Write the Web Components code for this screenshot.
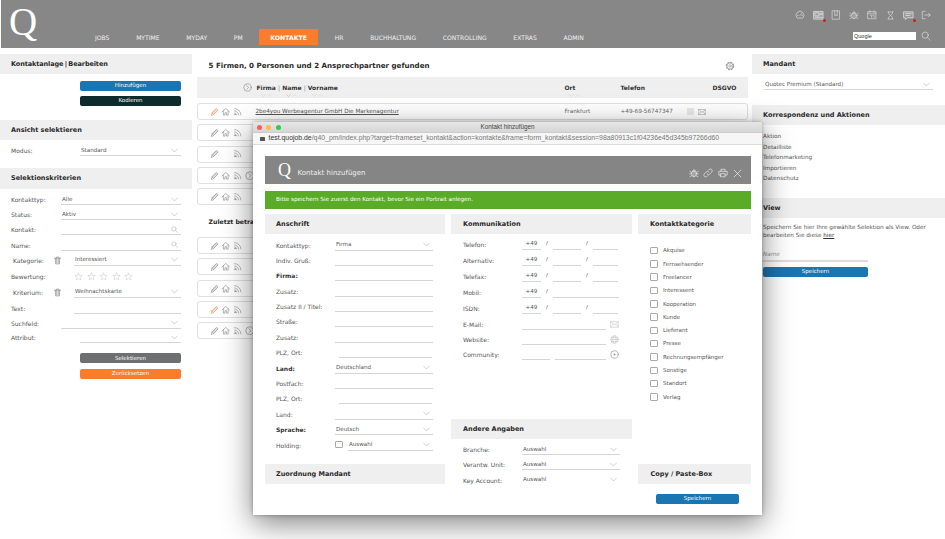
<!DOCTYPE html>
<html lang="de"><head><meta charset="utf-8"><title>Kontakt hinzufügen</title>
<style>
html,body{margin:0;background:#fff}
body{font:6px/1.2 "DejaVu Sans",sans-serif;color:#555}
</style></head><body>
<q-app>
  <q-topbar slot="top"></q-topbar>

  <q-col slot="left">
    <q-head style="word-spacing:-.8px;letter-spacing:-.1px">Kontaktanlage | Bearbeiten</q-head>
    <q-pad style="--t:7px;--gap:5px;--l:80px;--b:14px">
      <q-btn color="#1a76b0">Hinzufügen</q-btn>
      <q-btn color="#0d2a2c">Kodieren</q-btn>
    </q-pad>
    <q-head>Ansicht selektieren</q-head>
    <q-pad style="--t:4px;--b:9px">
      <q-field label="Modus:" lw="69"><q-select value="Standard"></q-select></q-field>
    </q-pad>
    <q-head style="--hh:21px">Selektionskriterien</q-head>
    <q-pad style="--t:4px">
      <q-field label="Kontakttyp:" lw="50" h="15.2"><q-select value="Alle"></q-select></q-field>
      <q-field label="Status:" lw="50" h="15.2"><q-select value="Aktiv"></q-select></q-field>
      <q-field label="Kontakt:" lw="50" h="15.2"><q-select search></q-select></q-field>
      <q-field label="Name:" lw="50" h="15.2"><q-select search></q-select></q-field>
      <q-field label="Kategorie:" lw="63" indent="2" trash h="16"><q-select value="Interessiert"></q-select></q-field>
      <q-field label="Bewertung:" lw="63" h="16"><q-stars></q-stars></q-field>
      <q-field label="Kriterium:" lw="63" indent="2" trash h="16"><q-select value="Weihnachtskarte"></q-select></q-field>
      <q-field label="Text:" lw="63" h="15"><q-select plain></q-select></q-field>
      <q-field label="Suchfeld:" lw="50" h="14.6"><q-select></q-select></q-field>
      <q-field label="Attribut:" lw="69" h="15"><q-select></q-select></q-field>
    </q-pad>
    <q-pad style="--t:7px;--gap:5.5px;--l:80px">
      <q-btn color="#6d7070">Selektieren</q-btn>
      <q-btn color="#fb7d2b">Zurücksetzen</q-btn>
    </q-pad>
  </q-col>

  <q-col slot="main">
    <q-title gear style="--tf:7.1px">5 Firmen, 0 Personen und 2 Ansprechpartner gefunden</q-title>
    <q-thead></q-thead>
    <q-rows>
      <q-row active firm="2be4you Werbeagentur GmbH Die Markenagentur" ort="Frankfurt" tel="+49-69-56747347" dsgvo></q-row>
      <q-row></q-row>
      <q-row nohome></q-row>
      <q-row more></q-row>
      <q-row></q-row>
    </q-rows>
    <q-title style="--th:32px;--tpad:2px;--tf:6.2px">Zuletzt betrachtet</q-title>
    <q-rows>
      <q-row></q-row>
      <q-row></q-row>
      <q-row></q-row>
      <q-row active></q-row>
      <q-row more></q-row>
    </q-rows>
  </q-col>

  <q-col slot="right">
    <q-head>Mandant</q-head>
    <q-pad style="--t:4px;--l:12px;--r:12px;--b:11px">
      <q-field h="16"><q-select value="Quotec Premium (Standard)"></q-select></q-field>
    </q-pad>
    <q-head>Korrespondenz und Aktionen</q-head>
    <q-links>
      <span>Aktion</span><span>Detailliste</span><span>Telefonmarketing</span><span>Importieren</span><span>Datenschutz</span>
    </q-links>
    <q-head>View</q-head>
    <q-view></q-view>
  </q-col>

  <q-window slot="over" win-title="Kontakt hinzufügen">
    <q-form-head></q-form-head>
    <q-notice>Bitte speichern Sie zuerst den Kontakt, bevor Sie ein Portrait anlegen.</q-notice>
    <q-cols>
      <q-fcol>
        <q-head style="--hl:11px">Anschrift</q-head>
        <q-pad style="--t:4.5px;--l:11px;--r:12px">
          <q-field label="Kontakttyp:" lw="59" h="15.4"><q-select value="Firma"></q-select></q-field>
          <q-field label="Indiv. Gruß:" lw="59" h="15.4"><q-select plain></q-select></q-field>
          <q-field label="Firma:" lw="59" h="15.4" bold><q-select plain></q-select></q-field>
          <q-field label="Zusatz:" lw="59" h="15.4"><q-select plain></q-select></q-field>
          <q-field label="Zusatz II / Titel:" lw="59" h="15.4"><q-select plain></q-select></q-field>
          <q-field label="Straße:" lw="59" h="15.4"><q-select plain></q-select></q-field>
          <q-field label="Zusatz:" lw="59" h="15.4"><q-select plain></q-select></q-field>
          <q-field label="PLZ, Ort:" lw="59" h="15.4"><q-split></q-split></q-field>
          <q-field label="Land:" lw="59" h="15.4" bold><q-select value="Deutschland"></q-select></q-field>
          <q-field label="Postfach:" lw="59" h="15.4"><q-select plain></q-select></q-field>
          <q-field label="PLZ, Ort:" lw="59" h="15.4"><q-split></q-split></q-field>
          <q-field label="Land:" lw="59" h="15.4"><q-select></q-select></q-field>
          <q-field label="Sprache:" lw="59" h="15.4" bold><q-select value="Deutsch"></q-select></q-field>
          <q-field label="Holding:" lw="59" h="15.4"><q-holding></q-holding></q-field>
        </q-pad>
        <q-head style="--hl:11px;margin-top:auto">Zuordnung Mandant</q-head>
      </q-fcol>
      <q-fcol>
        <q-head style="--hl:12px">Kommunikation</q-head>
        <q-pad style="--t:4px;--l:12px;--r:12px">
          <q-field label="Telefon:" lw="59" h="16"><q-phone></q-phone></q-field>
          <q-field label="Alternativ:" lw="59" h="16"><q-phone></q-phone></q-field>
          <q-field label="Telefax:" lw="59" h="16"><q-phone></q-phone></q-field>
          <q-field label="Mobil:" lw="59" h="16"><q-phone two></q-phone></q-field>
          <q-field label="ISDN:" lw="59" h="15.5"><q-phone></q-phone></q-field>
          <q-field label="E-Mail:" lw="59" h="15.2"><q-mline icon="mail"></q-mline></q-field>
          <q-field label="Website:" lw="59" h="15.2"><q-mline icon="globe"></q-mline></q-field>
          <q-field label="Community:" lw="59" h="15"><q-mline icon="plus" split></q-mline></q-field>
        </q-pad>
        <q-head style="--hl:12px;margin-top:auto">Andere Angaben</q-head>
        <q-pad style="--t:4px;--l:12px;--r:12px">
          <q-field label="Branche:" lw="59" h="15.4"><q-select value="Auswahl"></q-select></q-field>
          <q-field label="Verantw. Unit:" lw="59" h="15.4"><q-select value="Auswahl"></q-select></q-field>
          <q-field label="Key Account:" lw="59" h="10.2"><q-select value="Auswahl" noline></q-select></q-field>
        </q-pad>
      </q-fcol>
      <q-fcol>
        <q-head style="--hl:12px">Kontaktkategorie</q-head>
        <q-checks>
          <q-check>Akquise</q-check><q-check>Fernsehsender</q-check><q-check>Freelancer</q-check>
          <q-check>Interessent</q-check><q-check>Kooperation</q-check><q-check>Kunde</q-check>
          <q-check>Lieferant</q-check><q-check>Presse</q-check><q-check>Rechnungsempfänger</q-check>
          <q-check>Sonstige</q-check><q-check>Standort</q-check><q-check>Verlag</q-check>
        </q-checks>
        <q-head style="--hl:12.5px;margin-top:auto">Copy / Paste-Box</q-head>
      </q-fcol>
    </q-cols>
    <q-savebar><q-btn color="#1a76b0" style="width:83px">Speichern</q-btn></q-savebar>
  </q-window>
</q-app>

<script>
const ICONS={
pencil:'<path d="M3.5 20.5l1.6-5.6L16.5 3.5l4 4L9.100 18.900z"/><path d="M14.500 5.500l4 4M12 8l4 4M9.500 10.500l4 4M7 13l4 4M5.100 14.900l4 4"/>',
home:'<path d="M2.500 12.500L12 3.500l9.500 9"/><path d="M6 10v10.500h4v-6h4v6h4V10"/>',
rss:'<path d="M4 4a16 16 0 0 1 16 16M4 10a10 10 0 0 1 10 10M4 15a5 5 0 0 1 5 5"/><circle cx="5" cy="19" r="1"/>',
next:'<circle cx="12" cy="12" r="10"/><path d="M10 7l5 5-5 5"/>',
gear:'<circle cx="12" cy="12" r="3"/><circle cx="12" cy="12" r="7"/><circle cx="12" cy="12" r="9" stroke-width="2.500" stroke-dasharray="3.400 3.670"/>',
trash:'<path d="M4 6h16M9 6V3h6v3M6 6l1 15h10l1-15M10 9v9M14 9v9"/>',
search:'<circle cx="10" cy="10" r="7.500"/><path d="M15.500 15.500L22 22"/>',
star:'<path d="M12 2.500l2.900 6.300 6.900.8-5.100 4.700 1.400 6.800L12 17.700l-6.100 3.400 1.400-6.800L2.200 9.600l6.900-.8z"/>',
bug:'<ellipse cx="12" cy="14" rx="5.500" ry="7"/><path d="M8.500 8a3.500 3.500 0 0 1 7 0M12 7v14M2 8l5 3M22 8l-5 3M1.500 14h5M22.500 14h-5M2.500 21l4.500-3M21.500 21L17 18"/>',
link:'<path d="M10 14.500a4.500 4.500 0 0 0 6.400 0l4.300-4.300a4.500 4.500 0 0 0-6.400-6.400l-1.700 1.700"/><path d="M14 9.500a4.500 4.500 0 0 0-6.400 0l-4.300 4.300a4.500 4.500 0 0 0 6.400 6.400l1.700-1.700"/>',
print:'<path d="M7 8V3h10v5M7 17H2V8h20v9h-5"/><path d="M7 13.500h10V21H7z"/>',
close:'<path d="M3 3l18 18M21 3L3 21"/>',
mail:'<rect x="2" y="4.500" width="20" height="15"/><path d="M2 5l10 8 10-8M2 19l7-8M22 19l-7-8"/>',
globe:'<circle cx="12" cy="12" r="10"/><ellipse cx="12" cy="12" rx="4.500" ry="10"/><path d="M2 12h20M3.500 7h17M3.500 17h17"/>',
plus:'<circle cx="12" cy="12" r="10"/><path d="M10 12h4M12 10v4"/>',
gauge:'<path d="M5 19a9.500 9.500 0 1 1 14 0z"/><path d="M12 13l4-5M6 13h2M16 13h2"/>',
news:'<rect x="2" y="3" width="20" height="17" fill="currentColor" fill-opacity=".28"/><rect x="5" y="6" width="8" height="7"/><path d="M15 7h5M15 10h5M5 16h15"/>',
book:'<rect x="3.500" y="2" width="17" height="20"/><path d="M9 2v12l3-2.500 3 2.500V2"/>',
cal:'<rect x="2.500" y="4" width="19" height="17"/><path d="M2.500 9h19M7 2v4M17 2v4M8 13h3v5M14 13h3v5"/>',
glass:'<path d="M5 2.500h14M5 21.500h14M7 2.500v5l5 4.500 5-4.500v-5M7 21.500v-5l5-4.500 5 4.500v5"/>',
chat:'<path d="M2 4h20v13H9l-4 4v-4H2z" fill="currentColor" fill-opacity=".2"/><path d="M6 8h12M6 12h9"/>',
logout:'<path d="M10 3H3v18h7M9 12h13M18 8l4 4-4 4"/>',
chev:'<path d="M2 7l10 10L22 7"/>'
};
function def(name,css,html,init){
  customElements.define(name,class extends HTMLElement{
    constructor(){super();this.attachShadow({mode:'open'});}
    connectedCallback(){
      if(this._d)return;this._d=1;
      const h=typeof html==='function'?html(this):html;
      this.shadowRoot.innerHTML='<style>'+css+'</style>'+h;
      if(init)init(this);
    }
  });
}
const ico=(n,s,c,extra)=>`<q-icon name="${n}" size="${s}" style="color:${c||'#888'};${extra||''}"></q-icon>`;

def('q-icon',':host{display:inline-flex;flex:none}svg{display:block;fill:none;stroke:currentColor;stroke-linecap:round;stroke-linejoin:round}',
  e=>`<svg width="${e.getAttribute('size')||9}" height="${e.getAttribute('size')||9}" viewBox="0 0 24 24" stroke-width="${e.getAttribute('sw')||1.600}">${ICONS[e.getAttribute('name')]||''}</svg>`);

def('q-app',`:host{display:block;position:relative;width:945px;height:539px;overflow:hidden;background:#fff}
 .g{display:grid;grid-template-columns:192px 551px 193px;column-gap:4.500px;padding-top:6px}`,
 `<slot name="top"></slot><div class="g"><slot name="left"></slot><slot name="main"></slot><slot name="right"></slot></div><slot name="over"></slot>`);

def('q-topbar',`:host{display:flex;height:48px;margin-left:1px;background:#878787;color:#fff;position:relative}
 .logo{width:84px;flex:none;padding:0 0 0 8px;box-sizing:border-box;font:39px/44px "Liberation Serif",serif;color:#fff}
 nav{display:flex;gap:6.700px;align-items:flex-end;padding-bottom:3px}
 a{display:block;height:16px;padding:0 10px;font:6.050px/17px "DejaVu Sans",sans-serif;color:#efefef}
 a.on{background:#fb7d2b;color:#fff;font-weight:700;font-size:6.200px;padding:0 11px}
 .r{margin-left:auto;display:flex;flex-direction:column;align-items:flex-end;padding-right:14px}
 .ic{display:flex;align-items:center;gap:8px;height:14px;margin-top:8px;position:relative;color:#ddd}
 .ic span{position:relative;display:flex;width:10px;justify-content:center}
 .dot{position:absolute;right:-3px;bottom:-1px;width:3px;height:3px;border-radius:50%;background:#e8141c}
 .s{display:flex;align-items:center;gap:5px;margin-top:9px}
 .in{width:63px;height:8px;background:#fff;color:#333;font:5.500px/8px "Liberation Sans",sans-serif;padding-left:1px;box-sizing:border-box}`,
 `<div class="logo">Q</div><nav><a>JOBS</a><a>MYTIME</a><a>MYDAY</a><a>PM</a><a class="on">KONTAKTE</a><a>HR</a><a>BUCHHALTUNG</a><a>CONTROLLING</a><a>EXTRAS</a><a>ADMIN</a></nav>
 <div class="r"><div class="ic">
 <span>${ico('gauge',10,'#ddd')}</span><span>${ico('news',11,'#e4e4e4')}<i class="dot"></i></span><span>${ico('book',10,'#ddd')}</span><span>${ico('bug',10,'#ddd')}</span><span>${ico('cal',10,'#ddd')}</span><span>${ico('glass',9,'#ddd')}</span><span>${ico('chat',11,'#e4e4e4')}<i class="dot"></i></span><span>${ico('logout',10,'#ddd')}</span>
 </div><div class="s"><div class="in">Quogle</div>${ico('search',10,'#ddd')}</div></div>`);

def('q-col',':host{display:flex;flex-direction:column;min-width:0}','<slot></slot>');
def('q-head',`:host{display:flex;align-items:center;height:var(--hh,20px);flex:none;background:#efefef;padding-left:var(--hl,11px);font:700 6.500px/1 "DejaVu Sans",sans-serif;color:#2a2a2a;white-space:pre}`,'<slot></slot>');
def('q-pad',`:host{display:flex;flex-direction:column;gap:var(--gap,0);padding:var(--t,0) var(--r,11px) var(--b,0) var(--l,11px)}`,'<slot></slot>');
def('q-btn',`:host{display:flex;align-items:center;justify-content:center;height:10px;border-radius:2px;color:#fff;font:5.500px/1 "DejaVu Sans",sans-serif}`,
  '<slot></slot>',e=>{e.style.background=e.getAttribute('color')});
def('q-field',`:host{display:flex;align-items:flex-start;height:var(--h,15px);line-height:12px;color:#555}
 .l{flex:none;display:flex;align-items:center;height:14px;white-space:nowrap;position:relative}
 .c{flex:1;min-width:0}
 q-icon{position:absolute;left:42px;top:2.500px}
 .b{font-weight:700;color:#333}`,
 e=>{const lw=e.getAttribute('lw')||0;e.style.setProperty('--h',(e.getAttribute('h')||15)+'px');
 const t=e.getAttribute('label')||'';const ind=e.getAttribute('indent')||0;
 return `<div class="l" style="width:${lw}px"><span class="${e.hasAttribute('bold')?'b':''}" style="padding-left:${ind}px">${t}</span>${e.hasAttribute('trash')?ico('trash',9,'#777'):''}</div><div class="c"><slot></slot></div>`});
def('q-select',`:host{display:flex;align-items:center;justify-content:space-between;height:11px;border-bottom:1px solid #d5d5d5;padding:0 3px 0 1px;color:#555;font-size:5.600px;line-height:11px}
 :host([noline]){border-color:transparent}
 span{position:relative;top:.5px}
 q-icon{margin-top:1px}`,
 e=>`<span>${e.getAttribute('value')||''}</span>${e.hasAttribute('plain')?'':e.hasAttribute('search')?ico('search',7,'#aaa'):ico('chev',7,'#999')}`);
def('q-stars',':host{display:flex;gap:3.500px;height:14px;align-items:center}',()=>ico('star',9,'#cfcfcf').repeat(5));
def('q-split',':host{display:flex;gap:4px}i{display:block;height:11px;border-bottom:1px solid #d5d5d5}i:first-child{width:25px}i:last-child{flex:1;margin-right:1px}','<i></i><i></i>');
def('q-holding',`:host{display:flex;align-items:center;gap:5.500px}
 b{flex:none;width:5.500px;height:5.500px;border:1px solid #aaa;border-radius:1px}
 q-select{flex:1;min-width:0}`,'<b></b><q-select value="Auswahl"></q-select>');
def('q-phone',`:host{display:flex;align-items:flex-start;line-height:11px;font-size:5.600px}
 i{display:block;height:11px;border-bottom:1px solid #d5d5d5;text-align:center;font-style:normal}
 .a{width:19px}.m{width:28px}.e{width:25px}.mm{width:66px}
 s{text-decoration:none;width:12px;text-align:center}`,
 e=>e.hasAttribute('two')?`<i class="a">+49</i><s>/</s><i class="mm"></i>`:`<i class="a">+49</i><s>/</s><i class="m"></i><s>/</s><i class="e"></i>`);
def('q-mline',`:host{display:flex;align-items:flex-start;gap:4px}
 i{display:block;height:11px;border-bottom:1px solid #d5d5d5}
 .f{width:84px}.p1{width:28px}.p2{width:51px;margin-left:1px}
 q-icon{margin-top:2px}`,
 e=>{const n=e.getAttribute('icon');return (e.hasAttribute('split')?'<i class="p1"></i><i class="p2"></i>':'<i class="f"></i>')+ico(n,9,n==='plus'?'#888':'#c4c4c4')});
def('q-title',`:host{display:flex;align-items:center;justify-content:space-between;height:var(--th,23px);padding:var(--tpad,0) 13px 0 12px;box-sizing:border-box;font:700 var(--tf,6.500px)/1 "DejaVu Sans",sans-serif;color:#2a2a2a}`,
 e=>`<span><slot></slot></span>${e.hasAttribute('gear')?ico('gear',10,'#999'):''}`);
def('q-thead',`:host{display:grid;grid-template-columns:60px 308px 56px 92px 1fr;height:21px;background:#efefef;font:700 6px/1 "DejaVu Sans",sans-serif;color:#333;align-items:center;margin-bottom:5px}
 .i{display:flex;justify-content:flex-end;padding-right:5px}
 .d{color:#6d8aa0;font-weight:400}
 .car{position:absolute;left:4px;top:8.500px;display:flex;gap:1px}
 .w{position:relative;display:inline-block}`,
 `<div class="i">${ico('next',9,'#888')}</div>
 <div><span class="w">Firma<span class="car">${ico('chev',5,'#bbb')}${ico('chev',5,'#ccc','transform:scaleY(-1)')}</span></span> <span class="d">|</span> <span class="w">Name<span class="car">${ico('chev',5,'#fb7d2b')}${ico('chev',5,'#ccc','transform:scaleY(-1)')}</span></span> <span class="d">|</span> <span class="w">Vorname<span class="car">${ico('chev',5,'#bbb')}${ico('chev',5,'#ccc','transform:scaleY(-1)')}</span></span></div>
 <div><span class="w">Ort<span class="car">${ico('chev',5,'#bbb')}${ico('chev',5,'#ccc','transform:scaleY(-1)')}</span></span></div><div>Telefon</div><div>DSGVO</div>`);
def('q-rows',':host{display:flex;flex-direction:column;gap:4.300px}','<slot></slot>');
def('q-row',`:host{display:grid;grid-template-columns:58px 309px 56px 66px 1fr;align-items:center;height:17px;box-sizing:border-box;border:1px solid #e0e0e0;border-radius:3px;background:#fff;color:#666;flex:none;font-size:5.700px}
 .a{display:flex;align-items:center;gap:2px;padding-left:12px}
 .g{width:9.500px;flex:none}
 u{color:#555}
 .d{display:flex;gap:4px;align-items:center}
 .calc{width:7px;height:7px;background:#e9e9e9}`,
 e=>{const g=n=>e.getAttribute(n)||'';
 return `<div class="a">${ico('pencil',9.5,e.hasAttribute('active')?'#f2905a':'#8f8f8f')}${e.hasAttribute('nohome')?'<span class="g"></span>':ico('home',9.5,'#8f8f8f')}${ico('rss',9.5,'#8f8f8f')}${e.hasAttribute('more')?ico('next',9.5,'#8f8f8f','margin-left:1px'):''}</div>
 <div>${g('firm')?`<u>${g('firm')}</u>`:''}</div><div>${g('ort')}</div><div>${g('tel')}</div>
 <div class="d">${e.hasAttribute('dsgvo')?`<span class="calc"></span>${ico('mail',8,'#999')}`:''}</div>`});
def('q-links',':host{display:flex;flex-direction:column;padding:6px 0 14.500px 11px;line-height:10.500px;color:#555;font-size:5.700px}','<slot></slot>');
def('q-view',`:host{display:block;padding:6px 11px 0 11px;color:#555;line-height:7.500px;font-size:5.700px}
 u{color:#333}
 .n{margin-top:10px;width:105px;height:11px;line-height:11px;border-bottom:2px solid #ddd;color:#999;font-style:italic}
 q-btn{width:105px;margin-top:5px}`,
 `Speichern Sie hier Ihre gewählte Selektion als View. Oder<br>bearbeiten Sie diese <u>hier</u><div class="n">Name</div><q-btn color="#1a76b0">Speichern</q-btn>`);

def('q-window',`:host{position:absolute;left:253px;top:122px;width:509px;height:393px;background:#fff;box-shadow:0 8px 30px rgba(0,0,0,.5),0 0 4px rgba(0,0,0,.3);border-radius:3px 3px 0 0;display:flex;flex-direction:column}
 .tb{height:10px;background:linear-gradient(#e6e6e6,#d6d6d6);display:flex;align-items:center;position:relative;padding-left:3.500px;gap:4.500px;border-radius:3px 3px 0 0}
 .tb i{width:5px;height:5px;border-radius:50%}
 .tb span{position:absolute;left:0;right:0;text-align:center;font:6.300px/10px "Liberation Sans",sans-serif;color:#444}
 .url{height:13px;background:#f6f6f6;border-top:1px solid #ccc;border-bottom:1px solid #ddd;box-sizing:border-box;display:flex;align-items:center;gap:3.500px;padding-left:7px;font:6.880px/1 "Liberation Sans",sans-serif;color:#777;white-space:nowrap}
 .url b{font-weight:400;color:#333}
 .lock{width:5px;height:4px;background:#555;border-radius:.5px;position:relative;margin-top:1px}
 .body{flex:1;padding:11px 11px 0 12px;display:flex;flex-direction:column}`,
 e=>`<div class="tb"><i style="background:#fc5b57"></i><i style="background:#fdbc40"></i><i style="background:#34c84a"></i><span>${e.getAttribute('win-title')}</span></div>
 <div class="url"><div class="lock"></div><div><b>test.quojob.de</b>/q40_pm/index.php?target=frameset_kontakt&amp;action=kontakte&amp;frame=form_kontakt&amp;session=98a80913c1f04236e45d345b97266d60</div></div>
 <div class="body"><slot></slot></div>`);
def('q-form-head',`:host{display:flex;align-items:center;height:28px;background:#858585;color:#fff;padding:0 9px 0 13px;flex:none;margin-bottom:7px}
 .q{font:18px/20px "Liberation Serif",serif;margin-right:6.500px}
 .t{font:7px/1 "DejaVu Sans",sans-serif;color:#eee;margin-top:7px}
 .ic{margin-left:auto;display:flex;gap:4.500px;align-items:center;margin-top:6px}`,
 `<span class="q">Q</span><span class="t">Kontakt hinzufügen</span><div class="ic">${ico('bug',10,'#eee')}${ico('link',10,'#eee')}${ico('print',10,'#eee')}${ico('close',9,'#fff','margin-left:1px')}</div>`);
def('q-notice',`:host{display:flex;align-items:center;height:18px;background:#5aab28;color:#fff;padding-left:11px;flex:none;margin-bottom:5px;font:5.630px/1 "DejaVu Sans",sans-serif}`,'<slot></slot>');
def('q-cols',':host{display:grid;grid-template-columns:180px 181px 113px;column-gap:6px;height:270px;flex:none}','<slot></slot>');
def('q-fcol',':host{display:flex;flex-direction:column;min-width:0}','<slot></slot>');
def('q-checks',':host{display:flex;flex-direction:column;padding:10px 0 0 12px}','<slot></slot>');
def('q-check',`:host{display:flex;align-items:center;height:13.300px;color:#555;font-size:5.500px}
 b{width:5.500px;height:5.500px;border:1px solid #aaa;border-radius:1px;margin-right:5.500px;flex:none}`,'<b></b><slot></slot>');
def('q-savebar',':host{display:flex;justify-content:flex-end;margin-top:10px;padding-right:12px}','<slot></slot>');
</script>
</body></html>
